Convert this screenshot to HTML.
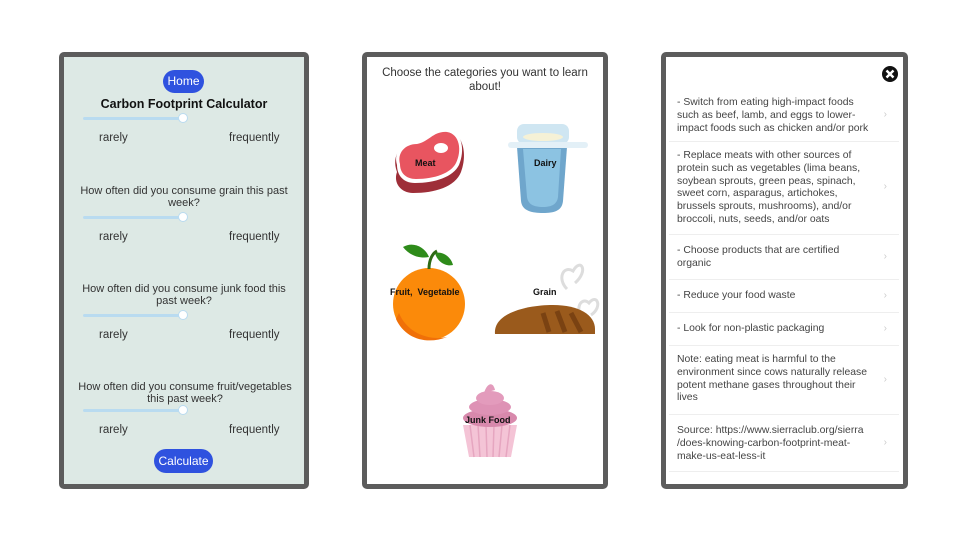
<!DOCTYPE html>
<html><head><meta charset="utf-8"><style>
*{margin:0;padding:0;box-sizing:border-box}
body{width:960px;height:540px;background:#fff;position:relative;overflow:hidden;font-family:"Liberation Sans",sans-serif;color:#222}
.ph{position:absolute;top:52px;height:437px;border:5px solid #5c5c5c;border-radius:5px}
.a{position:absolute}
.t{position:absolute;font-size:11px;text-align:center;line-height:12px;color:#333}
.sl{position:absolute;height:3px;background:#b9dbf0;border-radius:2px;width:100px}
.kn{position:absolute;width:10px;height:10px;border-radius:50%;background:#fff;border:1px solid #b9dbf0}
.lb{position:absolute;font-size:11.5px;color:#333}
.btn{position:absolute;background:#2f52df;color:#fff;font-size:12px;border-radius:12px;text-align:center}
.row{position:absolute;left:3px;width:230px;padding-left:8px;padding-right:30px;border-bottom:1px solid #eee;font-size:10.4px;line-height:12.8px;color:#444}
.row span{position:absolute;right:12px;color:#ccc;font-size:10px}
.lab{position:absolute;font-size:9px;font-weight:bold;color:#111}
</style></head><body>

<div class="ph" style="left:59px;width:250px;background:#dde9e5">
 <div class="btn" style="left:99px;top:13px;width:41px;height:23px;line-height:23px">Home</div>
 <div class="a" style="left:0;width:240px;top:40px;text-align:center;font-weight:bold;font-size:12.5px;color:#111">Carbon Footprint Calculator</div>
 <div class="sl" style="left:19px;top:60px"></div><div class="kn" style="left:114px;top:56px"></div>
 <div class="lb" style="left:35px;top:75px">rarely</div><div class="lb" style="left:165px;top:75px">frequently</div>

 <div class="t" style="left:10px;width:220px;top:128px">How often did you consume grain this past week?</div>
 <div class="sl" style="left:19px;top:159px"></div><div class="kn" style="left:114px;top:155px"></div>
 <div class="lb" style="left:35px;top:174px">rarely</div><div class="lb" style="left:165px;top:174px">frequently</div>

 <div class="t" style="left:14px;width:212px;top:226px">How often did you consume junk food this past week?</div>
 <div class="sl" style="left:19px;top:257px"></div><div class="kn" style="left:114px;top:253px"></div>
 <div class="lb" style="left:35px;top:272px">rarely</div><div class="lb" style="left:165px;top:272px">frequently</div>

 <div class="t" style="left:8px;width:226px;top:324px">How often did you consume fruit/vegetables this past week?</div>
 <div class="sl" style="left:19px;top:352px"></div><div class="kn" style="left:114px;top:348px"></div>
 <div class="lb" style="left:35px;top:367px">rarely</div><div class="lb" style="left:165px;top:367px">frequently</div>

 <div class="btn" style="left:90px;top:392px;width:59px;height:24px;line-height:24px">Calculate</div>
</div>

<div class="ph" style="left:362px;width:246px;background:#fff">
 <div class="a" style="left:5px;width:226px;top:9px;text-align:center;font-size:11.5px;line-height:14px;color:#333">Choose the categories you want to learn about!</div>
 <svg class="a" style="left:0;top:0" width="236" height="427">
  <path d="M30 115 C24 98 34 86 48 86 C62 86 66 72 80 74 C98 76 100 100 94 115 C88 130 68 136 46 136 C34 136 26 126 30 115Z" fill="#9e2e38"/>
  <path d="M30 108 C26 94 36 84 50 84 C62 82 66 70 80 72 C96 74 98 94 92 108 C86 120 68 126 48 126 C36 126 30 118 30 108Z" fill="#fff"/>
  <path d="M33 107 C30 96 38 87 50 87 C62 85 66 74 80 75 C93 77 95 94 89 106 C84 116 68 122 49 122 C39 122 33 116 33 107Z" fill="#e85560"/>
  <ellipse cx="74" cy="91" rx="7" ry="5" fill="#fff"/>
  <path d="M150 90 L154 144 C155 154 165 156 176 156 C187 156 195 154 196 144 L200 90Z" fill="#6fa6cc"/>
  <path d="M156 92 L160 140 C161 147 166 150 176 150 C185 150 190 147 191 140 L194 92Z" fill="#8cc3e2"/>
  <rect x="150" y="67" width="52" height="20" rx="7" fill="#cfe6f2"/>
  <ellipse cx="176" cy="80" rx="20" ry="4" fill="#f5f1d6"/>
  <rect x="141" y="85" width="80" height="6" rx="3" fill="#e3f0f7"/>
  <circle cx="62" cy="247" r="36" fill="#fb8a0a"/>
  <path d="M29 262 C38 282 60 288 80 280 C62 284 40 276 32 256Z" fill="#f07008"/>
  <path d="M36 190 C46 184 58 190 62 200 C52 202 42 198 36 190Z" fill="#2e8b1a"/>
  <path d="M68 196 C76 194 84 200 86 208 C78 210 70 204 68 196Z" fill="#2e8b1a"/>
  <path d="M62 212 C62 202 66 196 70 194" stroke="#2e6a14" stroke-width="3" fill="none"/>
  <path d="M200 232 C190 222 196 208 206 214 C214 200 222 214 208 226" stroke="#ddd" stroke-width="3" fill="none"/>
  <path d="M214 260 C208 248 216 240 222 246 C230 236 236 250 224 258" stroke="#ddd" stroke-width="3" fill="none"/>
  <path d="M128 277 C126 256 160 248 186 248 C212 248 228 258 228 272 L228 277Z" fill="#9a5a1c"/>
  <path d="M176 256 L182 275 M190 254 L198 275 M204 256 L214 275" stroke="#7a4212" stroke-width="5"/>
  <path d="M96 368 L102 400 L144 400 L150 368Z" fill="#f4c4d6"/>
  <path d="M103 368 L107 400 M111 368 L113 400 M119 368 L120 400 M127 368 L126 400 M135 368 L132 400 M143 368 L139 400" stroke="#e6a6c0" stroke-width="1.5"/>
  <ellipse cx="123" cy="361" rx="27" ry="9" fill="#d889ac"/>
  <ellipse cx="123" cy="350" rx="21" ry="8" fill="#de92b5"/>
  <ellipse cx="123" cy="341" rx="14" ry="7" fill="#e39bbc"/>
  <path d="M117 336 C120 326 126 324 128 333Z" fill="#e39bbc"/>
 </svg>
 <div class="lab" style="left:48px;top:101px">Meat</div>
 <div class="lab" style="left:167px;top:101px">Dairy</div>
 <div class="lab" style="left:23px;top:230px">Fruit,&nbsp; Vegetable</div>
 <div class="lab" style="left:166px;top:230px">Grain</div>
 <div class="lab" style="left:98px;top:358px">Junk Food</div>
</div>

<div class="ph" style="left:661px;width:247px;background:#fff">
 <svg class="a" style="left:215px;top:8px" width="18" height="18"><circle cx="9" cy="9" r="8" fill="#111"/><path d="M5.5 5.5L12.5 12.5M12.5 5.5L5.5 12.5" stroke="#fff" stroke-width="2.4"/></svg>
 <div class="row" style="top:32px;height:53px;padding-top:8px">- Switch from eating high-impact foods such as beef, lamb, and eggs to lower-impact foods such as chicken and/or pork<span style="top:20px">›</span></div>
 <div class="row" style="top:85px;height:93px;padding-top:8px">- Replace meats with other sources of protein such as vegetables (lima beans, soybean sprouts, green peas, spinach, sweet corn, asparagus, artichokes, brussels sprouts, mushrooms), and/or broccoli, nuts, seeds, and/or oats<span style="top:39px">›</span></div>
 <div class="row" style="top:178px;height:45px;padding-top:10px">- Choose products that are certified organic<span style="top:16px">›</span></div>
 <div class="row" style="top:223px;height:33px;padding-top:10px">- Reduce your food waste<span style="top:10px">›</span></div>
 <div class="row" style="top:256px;height:33px;padding-top:10px">- Look for non-plastic packaging<span style="top:10px">›</span></div>
 <div class="row" style="top:289px;height:69px;padding-top:8px">Note: eating meat is harmful to the environment since cows naturally release potent methane gases throughout their lives<span style="top:28px">›</span></div>
 <div class="row" style="top:358px;height:57px;padding-top:10px">Source: https://www.sierraclub.org/sierra /does-knowing-carbon-footprint-meat-make-us-eat-less-it<span style="top:22px">›</span></div>
</div>
</body></html>
